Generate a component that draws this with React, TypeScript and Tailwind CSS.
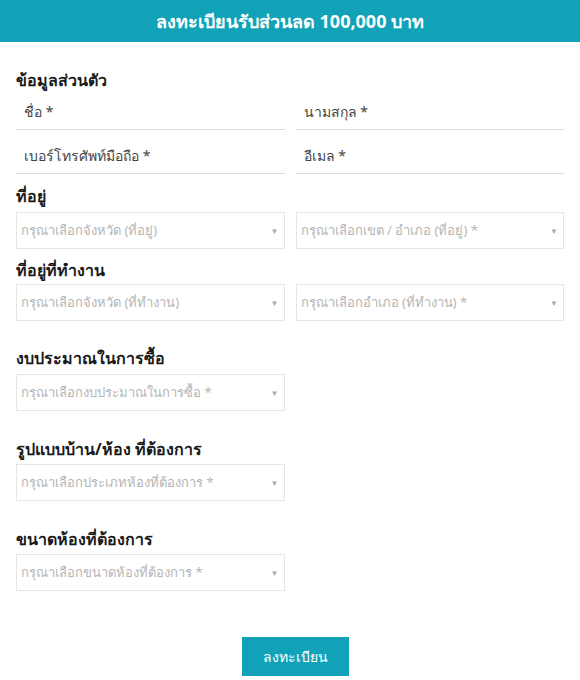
const font = { fontFamily: '"Noto Sans", "Liberation Sans", sans-serif' }

function TextInput({ label }: { label: string }) {
  return (
    <div className="h-[44px] border-b border-[#dcdcdc] flex items-center pt-[7px] px-2 text-[14px] text-[#444]">
      {label}
    </div>
  )
}

function Select({ placeholder }: { placeholder: string }) {
  return (
    <div className="h-[37px] border border-[#e6e6e6] flex items-center justify-between pl-[4px] pr-[5px] text-[13px] text-[#b5b5b5]">
      <span>{placeholder}</span>
      <span className="text-[8px] text-[#aaa]">▼</span>
    </div>
  )
}

function Heading({ children, className = "" }: { children: React.ReactNode; className?: string }) {
  return <h3 className={"text-[16px] leading-[20px] font-bold text-[#1a1a1a] " + className}>{children}</h3>
}

export default function App() {
  return (
    <div className="min-h-screen bg-white" style={font}>
      {/* header */}
      <div className="h-[42px] bg-[#12a2b8] flex items-center justify-center">
        <h1 className="text-white font-bold text-[18px]">ลงทะเบียนรับส่วนลด 100,000 บาท</h1>
      </div>

      <div className="px-4">
        <Heading className="mt-[28px]">ข้อมูลส่วนตัว</Heading>
        <div className="grid grid-cols-2 gap-x-[11px] -mt-[4px]">
          <TextInput label="ชื่อ *" />
          <TextInput label="นามสกุล *" />
          <TextInput label="เบอร์โทรศัพท์มือถือ *" />
          <TextInput label="อีเมล *" />
        </div>

        <Heading className="mt-[12px] mb-[6px]">ที่อยู่</Heading>
        <div className="grid grid-cols-2 gap-x-[11px]">
          <Select placeholder="กรุณาเลือกจังหวัด (ที่อยู่)" />
          <Select placeholder="กรุณาเลือกเขต / อำเภอ (ที่อยู่) *" />
        </div>

        <Heading className="mt-[11px] mb-[4px]">ที่อยู่ที่ทำงาน</Heading>
        <div className="grid grid-cols-2 gap-x-[11px]">
          <Select placeholder="กรุณาเลือกจังหวัด (ที่ทำงาน)" />
          <Select placeholder="กรุณาเลือกอำเภอ (ที่ทำงาน) *" />
        </div>

        <Heading className="mt-[27px] mb-[6px]">งบประมาณในการซื้อ</Heading>
        <div className="grid grid-cols-2 gap-x-[11px]">
          <Select placeholder="กรุณาเลือกงบประมาณในการซื้อ *" />
        </div>

        <Heading className="mt-[28px] mb-[5px]">รูปแบบบ้าน/ห้อง ที่ต้องการ</Heading>
        <div className="grid grid-cols-2 gap-x-[11px]">
          <Select placeholder="กรุณาเลือกประเภทห้องที่ต้องการ *" />
        </div>

        <Heading className="mt-[28px] mb-[5px]">ขนาดห้องที่ต้องการ</Heading>
        <div className="grid grid-cols-2 gap-x-[11px]">
          <Select placeholder="กรุณาเลือกขนาดห้องที่ต้องการ *" />
        </div>

        <div className="flex justify-center pl-[11px] mt-[46px]">
          <button className="w-[107px] h-[39px] bg-[#12a2b8] text-white text-[14px]">ลงทะเบียน</button>
        </div>
      </div>
    </div>
  )
}
